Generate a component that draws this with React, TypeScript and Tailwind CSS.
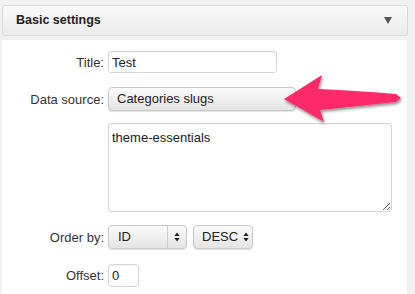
import React from 'react';

function UpDown() {
  return (
    <svg width="6" height="10" viewBox="0 0 6 10" className="shrink-0">
      <path d="M3 0.5 L5.6 4 L0.4 4 Z" fill="#222" />
      <path d="M3 9.5 L5.6 6 L0.4 6 Z" fill="#222" />
    </svg>
  );
}

function Row({ label, className, children }: { label: string; className?: string; children: React.ReactNode }) {
  return (
    <div className={`flex items-center ${className ?? ''}`}>
      <div className="w-[102px] text-right text-[#333] leading-none">{label}</div>
      <div className="ml-[4px]">{children}</div>
    </div>
  );
}

const selectCls =
  'flex items-center rounded-[4px] border border-[#c9c9c9] bg-gradient-to-b from-[#fbfbfb] to-[#e4e4e4] shadow-[0_1px_1px_rgba(0,0,0,0.12)] text-[#222]';

const inputCls =
  'rounded-[3px] border border-[#d6d6d6] bg-white shadow-[inset_0_1px_1px_rgba(0,0,0,0.05)] text-[#222] outline-none';

export default function App() {
  return (
    <div className="relative w-[415px] h-[294px] overflow-hidden bg-[#f1f1f1] font-['Liberation_Sans',Arial,sans-serif] text-[13px]">
      <div className="pt-[5px] pl-[2px]">
        <div className="w-[406px] h-[31px] rounded-[3px] border border-[#d8d8d8] bg-gradient-to-b from-[#fafafa] to-[#ebebeb] flex items-center justify-between pl-[13px] pr-[15px]">
          <span className="font-bold text-[#222] text-[12.5px]">Basic settings</span>
          <svg width="8" height="7" viewBox="0 0 8 7">
            <path d="M0 0 L8 0 L4 7 Z" fill="#555" />
          </svg>
        </div>

        <div className="mt-[4px] w-[405px] h-[260px] bg-white pt-[11px]">
          <Row label="Title:">
            <input readOnly defaultValue="Test" className={`${inputCls} w-[169px] h-[22px] px-[3px]`} />
          </Row>

          <Row label="Data source:" className="mt-[14px]">
            <div className={`${selectCls} w-[188px] h-[24px] pl-[8px]`}>Categories slugs</div>
          </Row>

          <div className="mt-[12px] ml-[106px]">
            <textarea
              readOnly
              defaultValue="theme-essentials"
              className={`${inputCls} block w-[284px] h-[89px] px-[3px] pt-[4px] resize-y`}
            />
          </div>

          <Row label="Order by:" className="mt-[13px]">
            <div className="flex gap-[6px]">
              <div className={`${selectCls} w-[79px] h-[24px]`}>
                <span className="pl-[9px] flex-1">ID</span>
                <span className="w-px h-full bg-[#cfcfcf]" />
                <span className="w-[18px] flex justify-center">
                  <UpDown />
                </span>
              </div>
              <div className={`${selectCls} w-[60px] h-[24px]`}>
                <span className="pl-[8px] flex-1">DESC</span>
                <span className="pr-[3px] flex">
                  <UpDown />
                </span>
              </div>
            </div>
          </Row>

          <Row label="Offset:" className="mt-[15px]">
            <input readOnly defaultValue="0" className={`${inputCls} w-[31px] h-[23px] px-[3px]`} />
          </Row>
        </div>
      </div>

      <svg className="absolute left-0 top-0 pointer-events-none" width="415" height="294" viewBox="0 0 415 294">
        <defs>
          <filter id="sh" x="-20%" y="-40%" width="140%" height="180%">
            <feDropShadow dx="1" dy="2" stdDeviation="1.4" floodColor="#000" floodOpacity="0.45" />
          </filter>
        </defs>
        <path
          d="M284 99 L322 75 L318 89 Q360 91 396 94 L401 98 L396 102 Q360 106 320 110 L324 122 Z"
          fill="#fd2b6b"
          filter="url(#sh)"
        />
      </svg>
    </div>
  );
}
